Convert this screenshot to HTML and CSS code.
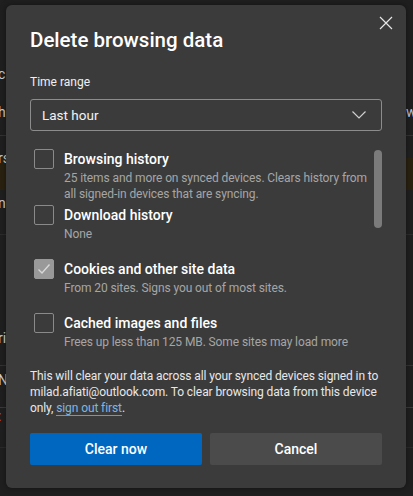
FILE: index.html
```
<!DOCTYPE html>
<html>
<head>
<meta charset="utf-8">
<link rel="stylesheet" href="styles.css">
</head>
<body>
<div class="backdrop">
  <div class="bg-row r1"><span class="l">c</span></div>
  <div class="bg-row r2"><span class="l">h</span><span class="r">w</span></div>
  <div class="bg-row r3"><span class="l">rs</span></div>
  <div class="bg-row r4"><span class="l">na</span></div>
  <div class="bg-row r5"><span class="l">ri</span></div>
  <div class="bg-row r6"><span class="l">N</span></div>
  <div class="bg-row r7"><span class="l red">:</span></div>
</div>
<div class="dialog">
  <button class="close" aria-label="Close">
    <svg width="14" height="14" viewBox="0 0 14 14"><path d="M1 1L13 13M13 1L1 13" stroke="#e6e6e6" stroke-width="1.2" fill="none"/></svg>
  </button>
  <h1 class="title">Delete browsing data</h1>
  <div class="label">Time range</div>
  <div class="select">
    <span>Last hour</span>
    <svg width="16" height="10" viewBox="0 0 16 10"><path d="M1.5 1.5L8 8L14.5 1.5" stroke="#d0d0d0" stroke-width="1.2" fill="none"/></svg>
  </div>
  <div class="list">
    <div class="items">
      <div class="item">
        <span class="box"></span>
        <div class="text">
          <div class="name">Browsing history</div>
          <div class="desc">25 items and more on synced devices. Clears history from all signed-in devices that are syncing.</div>
        </div>
      </div>
      <div class="item">
        <span class="box"></span>
        <div class="text">
          <div class="name">Download history</div>
          <div class="desc">None</div>
        </div>
      </div>
      <div class="item gap">
        <span class="box checked"><svg width="14" height="12" viewBox="0 0 14 12"><path d="M1.5 6.5L5 10L12.5 1.5" stroke="#d8d8d8" stroke-width="1.4" fill="none"/></svg></span>
        <div class="text">
          <div class="name">Cookies and other site data</div>
          <div class="desc">From 20 sites. Signs you out of most sites.</div>
        </div>
      </div>
      <div class="item gap">
        <span class="box"></span>
        <div class="text">
          <div class="name">Cached images and files</div>
          <div class="desc">Frees up less than 125 MB. Some sites may load more slowly on your next visit.</div>
        </div>
      </div>
    </div>
    <div class="scrollbar"></div>
  </div>
  <p class="note">This will clear your data across all your synced devices signed in to milad.afiati@outlook.com. To clear browsing data from this device only, <a href="#">sign out first</a>.</p>
  <div class="buttons">
    <button class="btn primary">Clear now</button>
    <button class="btn secondary">Cancel</button>
  </div>
</div>
</body>
</html>
```
FILE: styles.css
```
* { box-sizing: border-box; }
html, body { margin: 0; padding: 0; }
body {
  width: 413px;
  height: 496px;
  background: #1f1f1f;
  font-family: Roboto, "Liberation Sans", sans-serif;
  position: relative;
  overflow: hidden;
  padding: 5px 0 0 6px;
}
.backdrop {
  position: absolute;
  left: 0; top: 0; width: 413px; height: 496px;
}
.bg-row {
  position: absolute;
  left: 0; width: 413px;
  font-size: 14px;
  color: #cfcfcf;
}
.bg-row .l { position: absolute; left: -2px; }
.bg-row .r { position: absolute; left: 406px; color: #b9c4e0; }
.r1 { top: 66px; }
.r2 { top: 104px; height: 32px; border-bottom: 1px solid #333; }
.r3 { top: 150px; height: 40px; background: linear-gradient(#202020 0 8px, #2a2110 8px 40px); }
.r4 { top: 195px; height: 40px; border-bottom: 1px solid #2c2c2c; }
.r5 { top: 330px; height: 36px; border-bottom: 1px solid #333; }
.r6 { top: 372px; height: 36px; border-bottom: 1px solid #3a3a3a; }
.r7 { top: 408px; height: 40px; border-bottom: 1px solid #2a2a2a; }
.red { color: #d05a30; }

.dialog {
  position: relative;
  width: 400px;
  height: 483px;
  background: #3b3b3b;
  border-radius: 6px;
  padding: 21px 24px 0 24px;
  color: #ffffff;
  box-shadow: 0 0 6px rgba(0,0,0,0.4);
}
.close {
  position: absolute;
  right: 8px;
  top: 6px;
  width: 24px; height: 24px;
  background: none; border: 0; padding: 0;
  display: flex; align-items: center; justify-content: center;
}
.title {
  margin: 0;
  font-size: 20.5px;
  font-weight: 500;
  line-height: 28px;
}
.label {
  margin-top: 19px;
  font-size: 12px;
  line-height: 18px;
  color: #f0f0f0;
}
.select {
  margin-top: 8px;
  height: 32px;
  border: 1px solid #8c8c8c;
  border-radius: 3px;
  display: flex;
  align-items: center;
  justify-content: space-between;
  padding: 0 14px 0 11px;
  font-size: 13.5px;
  color: #f2f2f2;
}
.list {
  margin-top: 18px;
  position: relative;
  height: 203px;
  overflow: hidden;
}
.items { padding-left: 4px; }
.scrollbar {
  position: absolute;
  right: 0;
  top: 1px;
  width: 8px;
  height: 78px;
  background: #7b7b7b;
  border-radius: 4px;
}
.item {
  display: flex;
  gap: 10px;
}
.item + .item { margin-top: 3px; }
.item.gap { margin-top: 17px; }
.box {
  width: 20px; height: 20px;
  border: 1px solid #8a8a8a;
  border-radius: 2px;
  flex: none;
  display: flex; align-items: center; justify-content: center;
}
.box.checked {
  background: #999999;
  border-color: #999999;
}
.text { width: 310px; }
.name {
  font-size: 14px;
  font-weight: 500;
  line-height: 20px;
  color: #ffffff;
}
.desc {
  font-size: 12px;
  letter-spacing: -0.1px;
  line-height: 16px;
  color: #a6a6a6;
  margin-top: 1px;
}
.note {
  margin: 16px 0 0 0;
  font-size: 12px;
  letter-spacing: -0.1px;
  line-height: 16px;
  color: #e8e8e8;
}
.note a {
  color: #7fb6e0;
  text-decoration: none;
  border-bottom: 1px solid #5e9ccc;
}
.buttons {
  margin-top: 17px;
  display: flex;
  gap: 8px;
}
.btn {
  flex: 1;
  height: 32px;
  border: 0;
  border-radius: 2px;
  font-family: inherit;
  font-size: 14px;
  font-weight: 500;
  color: #ffffff;
}
.primary { background: #0067c0; }
.secondary { background: #4b4b4b; }
```
